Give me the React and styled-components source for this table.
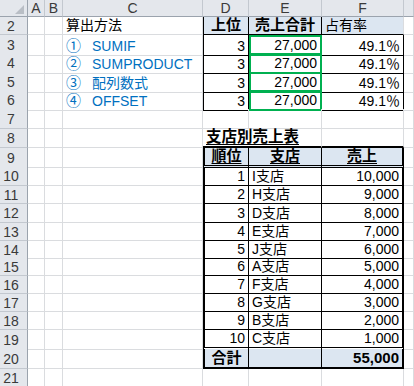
import React from 'react';
import styled, { createGlobalStyle } from 'styled-components';

const GRID = '#dadcdf';
const HEAD_BG = '#e4e7ec';
const HEAD_LINE = '#c3c8cf';
const HEAD_EDGE = '#9ba3ad';
const FILL = '#dce6f1';
const BLUE = '#0070c0';
const GREEN = '#00b050';
const THIN = '1px solid #000';
const THICK = '2px solid #000';
const DOUBLE = '3px double #000';
const BOX = `2px solid ${GREEN}`;

const COLS = '28px 17px 18px 140px 46px 73px 82px 1fr';
const HEIGHTS = { 2: 18, 3: 18, 4: 19, 5: 18, 6: 19, 7: 20, 8: 19, 9: 19, 10: 19, 11: 18, 12: 19, 13: 18, 14: 17, 15: 18, 16: 18, 17: 18, 18: 18, 19: 19, 20: 20, 21: 18 };

const GlobalStyle = createGlobalStyle`
  html, body {
    margin: 0;
    padding: 0;
    background: #fff;
  }
`;

const Sheet = styled.div`
  width: 414px;
  height: 386px;
  overflow: hidden;
  display: flex;
  flex-direction: column;
  background: #fff;
  font-family: "Liberation Sans", "Noto Sans CJK JP", sans-serif;
  font-size: 14px;
  color: #000;
`;

const Row = styled.div`
  display: grid;
  grid-template-columns: ${COLS};
  height: ${p => p.$h}px;
  flex: none;
`;

const ColHead = styled.div`
  box-sizing: border-box;
  display: flex;
  align-items: center;
  justify-content: center;
  background: ${HEAD_BG};
  border-right: 1px solid ${HEAD_LINE};
  border-bottom: 1px solid ${HEAD_EDGE};
  color: #3a3a3a;
  font-size: 14px;
`;

const Corner = styled(ColHead)`
  justify-content: flex-end;
  align-items: flex-end;
  padding: 0 3px 2px 0;
  border-right: 1px solid ${HEAD_EDGE};
`;

const RowHead = styled.div`
  box-sizing: border-box;
  display: flex;
  align-items: center;
  justify-content: center;
  padding-right: 5px;
  background: ${HEAD_BG};
  border-right: 1px solid ${HEAD_EDGE};
  border-bottom: 1px solid ${HEAD_LINE};
  color: #3a3a3a;
  font-size: 14px;
`;

const Cell = styled.div`
  box-sizing: border-box;
  min-width: 0;
  display: flex;
  align-items: flex-end;
  justify-content: ${p => p.$align || 'flex-start'};
  padding: 0 3px 1px;
  border-top: ${p => p.$t || 'none'};
  border-left: ${p => p.$l || 'none'};
  border-right: ${p => p.$r || `1px solid ${GRID}`};
  border-bottom: ${p => p.$b || `1px solid ${GRID}`};
  background: ${p => p.$fill || 'transparent'};
  color: ${p => p.$color || '#000'};
  font-weight: ${p => (p.$bold ? 700 : 400)};
  font-size: ${p => p.$size || 14}px;
  line-height: 16px;
  white-space: nowrap;
`;

const Label = styled.span`
  line-height: 16px;
  text-decoration: ${p => (p.$under ? 'underline' : 'none')};
  text-underline-offset: 2px;
`;

const Num = styled.span`
  font-size: 15px;
  line-height: 16px;
  margin-right: 11px;
`;

const methods = [
  { n: '①', t: 'SUMIF' },
  { n: '②', t: 'SUMPRODUCT' },
  { n: '③', t: '配列数式' },
  { n: '④', t: 'OFFSET' },
];

const branches = [
  ['1', 'I支店', '10,000'],
  ['2', 'H支店', '9,000'],
  ['3', 'D支店', '8,000'],
  ['4', 'E支店', '7,000'],
  ['5', 'J支店', '6,000'],
  ['6', 'A支店', '5,000'],
  ['7', 'F支店', '4,000'],
  ['8', 'G支店', '3,000'],
  ['9', 'B支店', '2,000'],
  ['10', 'C支店', '1,000'],
];

// column C content
function cFor(r) {
  if (r === 2) return { text: '算出方法' };
  const m = methods[r - 3];
  if (m) return { num: m.n, text: m.t, color: BLUE };
  return {};
}

// columns D, E, F for a given row
function tableCells(r) {
  if (r === 2) {
    return [
      { text: '上位', bold: true, size: 15, align: 'center', fill: FILL, l: THIN, r: THIN, b: THIN },
      { text: '売上合計', bold: true, size: 15, align: 'center', fill: FILL, r: THIN, b: THIN },
      { text: '占有率', fill: FILL, b: THIN },
    ];
  }
  if (r >= 3 && r <= 6) {
    return [
      { text: '3', align: 'flex-end', l: THIN, r: THIN, b: THIN },
      { text: '27,000', align: 'flex-end', t: BOX, l: BOX, r: BOX, b: BOX },
      { text: '49.1％', align: 'flex-end', r: THIN, b: THIN },
    ];
  }
  if (r === 8) {
    return [
      { text: '支店別売上表', bold: true, size: 15.5, under: true, r: 'none', b: THICK },
      { b: THICK },
      { b: THICK },
    ];
  }
  if (r === 9) {
    return [
      { text: '順位', bold: true, size: 15, under: true, align: 'center', fill: FILL, l: THICK, r: THIN, b: DOUBLE },
      { text: '支店', bold: true, size: 15, under: true, align: 'center', fill: FILL, r: THIN, b: DOUBLE },
      { text: '売上', bold: true, size: 15, under: true, align: 'center', fill: FILL, r: THICK, b: DOUBLE },
    ];
  }
  if (r >= 10 && r <= 19) {
    const [rank, name, sales] = branches[r - 10];
    const b = r === 19 ? DOUBLE : THIN;
    return [
      { text: rank, align: 'flex-end', l: THICK, r: THIN, b },
      { text: name, r: THIN, b },
      { text: sales, align: 'flex-end', r: THICK, b },
    ];
  }
  if (r === 20) {
    return [
      { text: '合計', bold: true, size: 15, align: 'center', fill: FILL, l: THICK, r: THIN, b: THICK },
      { fill: FILL, r: THIN, b: THICK },
      { text: '55,000', bold: true, size: 15, align: 'flex-end', fill: FILL, r: THICK, b: THICK },
    ];
  }
  return [{}, {}, {}];
}

function SheetCell({ spec }) {
  return (
    <Cell
      $align={spec.align}
      $t={spec.t}
      $l={spec.l}
      $r={spec.r}
      $b={spec.b}
      $fill={spec.fill}
      $color={spec.color}
      $bold={spec.bold}
      $size={spec.size}
    >
      {spec.num && <Num>{spec.num}</Num>}
      {spec.text && <Label $under={spec.under}>{spec.text}</Label>}
    </Cell>
  );
}

const rows = Object.keys(HEIGHTS).map(Number);

export default function App() {
  return (
    <>
      <GlobalStyle />
      <Sheet>
        <Row $h={17}>
          <Corner>
            <svg width="9" height="9" viewBox="0 0 9 9">
              <polygon points="9,0 9,9 0,9" fill="#b9bec5" />
            </svg>
          </Corner>
          {['A', 'B', 'C', 'D', 'E', 'F', ''].map(c => (
            <ColHead key={c || 'G'}>{c}</ColHead>
          ))}
        </Row>
        {rows.map(r => (
          <Row key={r} $h={HEIGHTS[r]}>
            <RowHead>{r}</RowHead>
            <SheetCell spec={{}} />
            <SheetCell spec={{}} />
            <SheetCell spec={cFor(r)} />
            {tableCells(r).map((spec, i) => (
              <SheetCell key={i} spec={spec} />
            ))}
            <SheetCell spec={{}} />
          </Row>
        ))}
      </Sheet>
    </>
  );
}
